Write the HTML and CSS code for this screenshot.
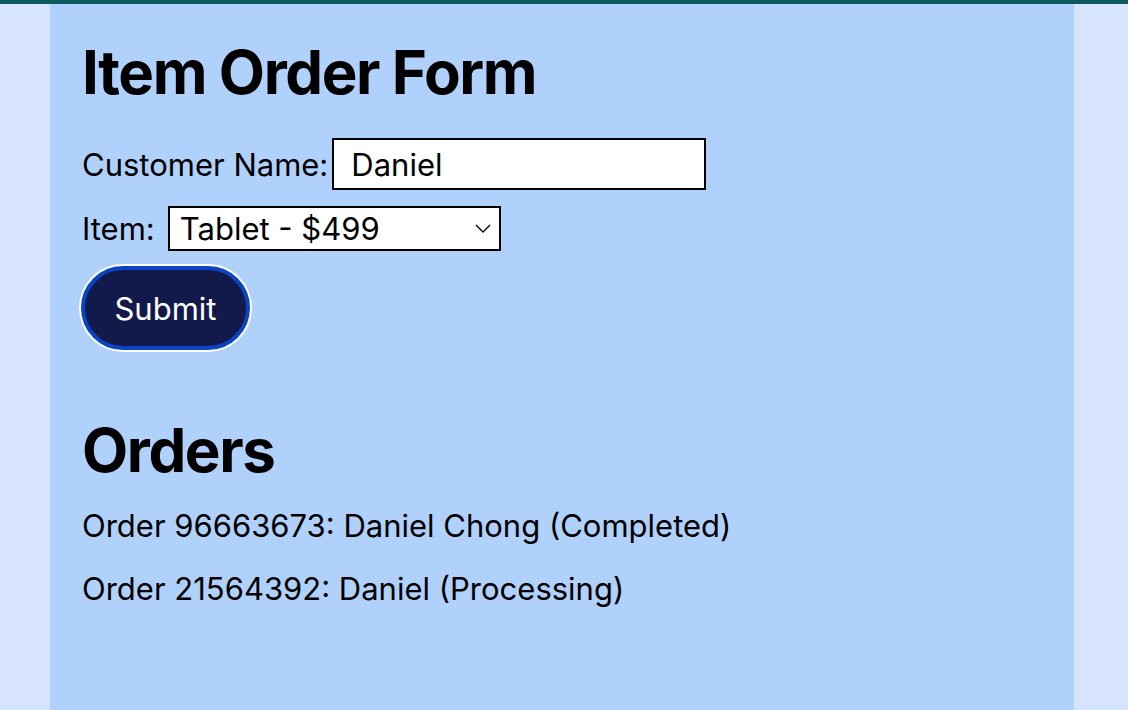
FILE: index.html
```html
<!DOCTYPE html>
<html>
<head>
<meta charset="utf-8">
<link rel="stylesheet" href="styles.css">
</head>
<body>
<main class="container">
  <h1 class="title">Item Order Form</h1>
  <form class="order-form">
    <div class="row row-name">
      <label for="name">Customer Name:</label>
      <input id="name" class="text-input" type="text" value="Daniel">
    </div>
    <div class="row row-item">
      <label for="item">Item:</label>
      <select id="item" class="select">
        <option>Tablet - $499</option>
      </select>
    </div>
    <button type="button" class="submit">Submit</button>
  </form>
  <h1 class="title orders-title">Orders</h1>
  <p class="order">Order 96663673: Daniel Chong (Completed)</p>
  <p class="order">Order 21564392: Daniel (Processing)</p>
</main>
</body>
</html>
```

FILE: styles.css
```css
html, body {
  margin: 0;
  padding: 0;
}
body {
  background: #d6e4fe;
  border-top: 4px solid #0e5860;
  font-family: Inter, "Noto Sans", sans-serif;
  font-size: 31px;
  color: #000;
  height: 706px;
  overflow: hidden;
}
.container {
  width: 960px;
  margin: 0 0 0 50px;
  padding: 1px 32px 0;
  background: #b1d1fd;
  height: 100%;
  box-sizing: content-box;
}
.title {
  font-size: 60px;
  font-weight: 700;
  letter-spacing: -1.4px;
  margin: 31px 0 30px;
  line-height: 72px;
}
.orders-title {
  margin-top: 64px;
  margin-bottom: 22px;
}
.order-form {
  display: flex;
  flex-direction: column;
  align-items: flex-start;
}
.row {
  display: flex;
  align-items: center;
  gap: 4px;
}
.row-item {
  margin-top: 16px;
}
.row-item label {
  margin-right: 9px;
}
.text-input {
  font: inherit;
  width: 374px;
  height: 52px;
  box-sizing: border-box;
  border: 2px solid #000;
  padding: 0 17px;
  background: #fff;
  color: #000;
  outline: none;
}
.select {
  font: inherit;
  width: 333px;
  height: 45px;
  box-sizing: border-box;
  border: 2px solid #000;
  border-radius: 0;
  background: #fff;
  color: #000;
  padding: 0 10px;
  appearance: none;
  -webkit-appearance: none;
  background-image: url("data:image/svg+xml,%3Csvg xmlns='http://www.w3.org/2000/svg' width='16' height='9' viewBox='0 0 16 9'%3E%3Cpath d='M1 1l7 7 7-7' fill='none' stroke='%23000' stroke-width='1.4'/%3E%3C/svg%3E");
  background-repeat: no-repeat;
  background-position: right 8px center;
}
.submit {
  font: inherit;
  color: #fff;
  background: #111a4b;
  border: 4px solid #0a44c0;
  box-shadow: 0 0 0 2px #fff;
  border-radius: 44px;
  width: 169px;
  height: 84px;
  padding: 0;
  margin-top: 15px;
  margin-left: -1px;
  cursor: pointer;
}
.order {
  margin: 0 0 27px;
  line-height: 36px;
}
```
